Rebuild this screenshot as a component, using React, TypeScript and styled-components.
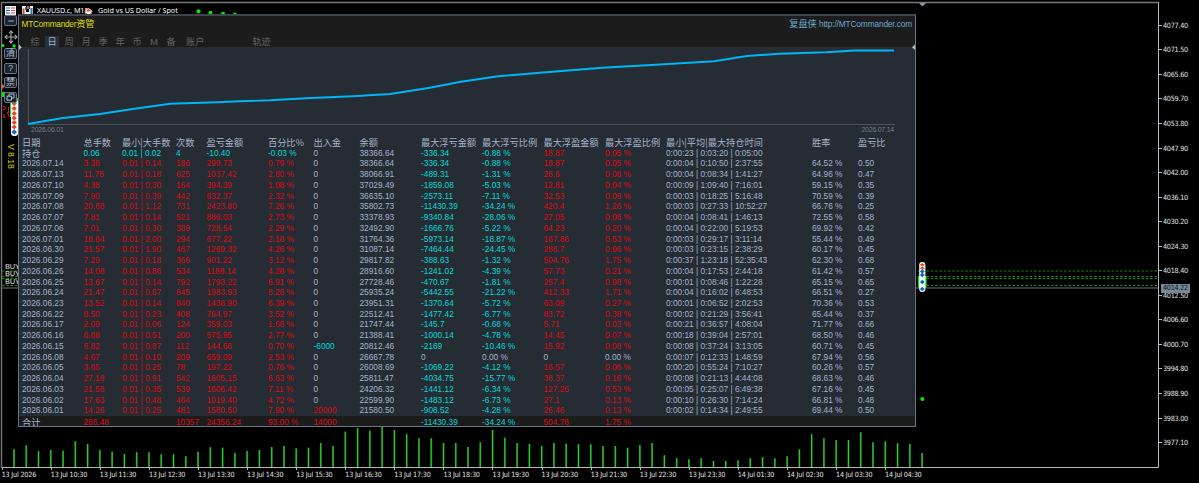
import { Minus, Move } from "lucide-react";
import styled, { createGlobalStyle } from "styled-components";

const RED = "#de0a12";
const CYAN = "#00dada";
const TEXT = "#a6b3cd";

const columns = [
  { title: "日期", width: 61.5 },
  { title: "总手数", width: 38.5 },
  { title: "最小|大手数", width: 54 },
  { title: "次数", width: 30.5 },
  { title: "盈亏金额", width: 61.5 },
  { title: "百分比%", width: 45.5 },
  { title: "出入金", width: 46 },
  { title: "余额", width: 61.5 },
  { title: "最大浮亏金额", width: 61 },
  { title: "最大浮亏比例", width: 61.5 },
  { title: "最大浮盈金额", width: 61.5 },
  { title: "最大浮盈比例", width: 61 },
  { title: "最小|平均|最大持仓时间", width: 146 },
  { title: "胜率", width: 46 },
  { title: "盈亏比", width: 50 },
];

const rows = [
  "持仓;0.06;0.01 | 0.02;4;-10.40;-0.03 %;0;38366.64;-336.34;-0.88 %;18.87;0.05 %;0:00:23 | 0:03:20 | 0:05:00;;",
  "2026.07.14;3.38;0.01 | 0.14;186;299.73;0.79 %;0;38366.64;-336.34;-0.88 %;18.87;0.05 %;0:00:04 | 0:10:50 | 2:37:55;64.52 %;0.50",
  "2026.07.13;11.78;0.01 | 0.18;625;1037.42;2.80 %;0;38066.91;-489.31;-1.31 %;28.6;0.08 %;0:00:04 | 0:08:34 | 1:41:27;64.96 %;0.47",
  "2026.07.10;4.38;0.01 | 0.30;164;394.39;1.08 %;0;37029.49;-1859.08;-5.03 %;12.81;0.04 %;0:00:09 | 1:09:40 | 7:16:01;59.15 %;0.35",
  "2026.07.09;7.90;0.01 | 0.39;442;832.37;2.32 %;0;36635.10;-2573.11;-7.11 %;32.53;0.09 %;0:00:03 | 0:18:25 | 5:16:48;70.59 %;0.39",
  "2026.07.08;20.88;0.01 | 1.12;731;2423.80;7.26 %;0;35802.73;-11430.39;-34.24 %;420.4;1.26 %;0:00:03 | 0:27:33 | 10:52:27;66.76 %;0.25",
  "2026.07.07;7.81;0.01 | 0.14;521;886.03;2.73 %;0;33378.93;-9340.84;-28.06 %;27.05;0.08 %;0:00:04 | 0:08:41 | 1:46:13;72.55 %;0.58",
  "2026.07.06;7.01;0.01 | 0.30;389;728.54;2.29 %;0;32492.90;-1666.76;-5.22 %;64.23;0.20 %;0:00:04 | 0:22:00 | 5:19:53;69.92 %;0.42",
  "2026.07.01;18.64;0.01 | 2.00;294;677.22;2.18 %;0;31764.36;-5973.14;-18.87 %;167.86;0.53 %;0:00:03 | 0:29:17 | 3:11:14;55.44 %;0.49",
  "2026.06.30;21.57;0.01 | 1.90;467;1269.32;4.26 %;0;31087.14;-7464.44;-24.45 %;286.7;0.96 %;0:00:03 | 0:23:15 | 2:38:29;60.17 %;0.45",
  "2026.06.29;7.29;0.01 | 0.18;366;901.22;3.12 %;0;29817.82;-388.63;-1.32 %;504.76;1.75 %;0:00:37 | 1:23:18 | 52:35:43;62.30 %;0.68",
  "2026.06.26;14.08;0.01 | 0.86;534;1188.14;4.28 %;0;28916.60;-1241.02;-4.39 %;57.73;0.21 %;0:00:04 | 0:17:53 | 2:44:18;61.42 %;0.57",
  "2026.06.25;13.67;0.01 | 0.14;792;1793.22;6.91 %;0;27728.46;-470.67;-1.81 %;257.4;0.98 %;0:00:01 | 0:08:46 | 1:22:28;65.15 %;0.65",
  "2026.06.24;21.47;0.01 | 0.67;845;1983.93;8.28 %;0;25935.24;-5442.55;-21.22 %;412.33;1.71 %;0:00:04 | 0:16:02 | 6:48:53;66.51 %;0.27",
  "2026.06.23;13.52;0.01 | 0.14;840;1438.90;6.39 %;0;23951.31;-1370.64;-5.72 %;63.09;0.27 %;0:00:01 | 0:06:52 | 2:02:53;70.36 %;0.53",
  "2026.06.22;8.50;0.01 | 0.23;408;764.97;3.52 %;0;22512.41;-1477.42;-6.77 %;83.72;0.38 %;0:00:02 | 0:21:29 | 3:56:41;65.44 %;0.37",
  "2026.06.17;2.09;0.01 | 0.06;124;359.03;1.68 %;0;21747.44;-145.7;-0.68 %;5.71;0.03 %;0:00:21 | 0:36:57 | 4:08:04;71.77 %;0.66",
  "2026.06.16;6.68;0.01 | 0.51;200;575.95;2.77 %;0;21388.41;-1000.14;-4.78 %;14.45;0.07 %;0:00:18 | 0:39:04 | 2:57:01;68.50 %;0.46",
  "2026.06.15;6.82;0.01 | 0.87;112;144.68;0.70 %;-6000;20812.46;-2169;-10.46 %;15.92;0.08 %;0:00:08 | 0:37:24 | 3:13:05;60.71 %;0.45",
  "2026.06.08;4.67;0.01 | 0.10;209;659.09;2.53 %;0;26667.78;0;0.00 %;0;0.00 %;0:00:07 | 0:12:33 | 1:48:59;67.94 %;0.56",
  "2026.06.05;3.65;0.01 | 0.25;78;197.22;0.76 %;0;26008.69;-1069.22;-4.12 %;16.57;0.06 %;0:00:20 | 0:55:24 | 7:10:27;60.26 %;0.57",
  "2026.06.04;27.18;0.01 | 0.91;542;1605.15;6.63 %;0;25811.47;-4034.75;-15.77 %;38.37;0.16 %;0:00:08 | 0:21:13 | 4:44:08;68.63 %;0.46",
  "2026.06.03;21.56;0.01 | 0.35;539;1606.42;7.11 %;0;24206.32;-1441.12;-6.34 %;127.26;0.53 %;0:00:05 | 0:25:07 | 6:49:38;67.16 %;0.45",
  "2026.06.02;17.63;0.01 | 0.48;464;1019.40;4.72 %;0;22599.90;-1483.12;-6.73 %;27.1;0.13 %;0:00:10 | 0:26:30 | 7:14:24;66.81 %;0.48",
  "2026.06.01;14.26;0.01 | 0.25;481;1580.50;7.90 %;20000;21580.50;-908.52;-4.28 %;26.46;0.13 %;0:00:02 | 0:14:34 | 2:49:55;69.44 %;0.50",
  "合计;286.48;;10357;24356.24;93.00 %;14000;;-11430.39;-34.24 %;504.76;1.75 %;;;",
].map((row) => row.split(";"));

const volumes = [
  17.7, 21.7, 15.7, 17, 16.3, 25.7, 23, 17, 15.3, 13, 14.7, 14.7, 12.7, 12.7, 10.7, 15.3, 19.7, 19.3, 14, 16, 17, 20,
  21, 18.7, 19.3, 24, 21, 35.3, 38.7, 36.3, 40, 37, 32.7, 28.7, 28.7, 24, 24, 20, 24.7, 37, 29.3, 24, 23, 21, 24, 23.3,
  22.7, 22.7, 21, 21, 19.3, 22, 24, 11.7, 8.7, 7.7, 8.7, 6, 6, 6.7, 8.7, 9.7, 8.7, 10.7, 17.7, 32.7, 28.7, 27, 27, 34.7,
  24.7, 25.7, 23.7, 23, 14,
];

const prices = [
  "4077.40", "4071.50", "4065.60", "4059.70", "4053.80", "4047.90", "4042.00", "4036.10", "4030.20",
  "4024.30", "4018.40", "4012.50", "4006.60", "4000.70", "3994.80", "3988.90", "3983.00", "3977.10",
];

const times = [
  "13 Jul 2026", "13 Jul 10:30", "13 Jul 11:30", "13 Jul 12:30", "13 Jul 13:30", "13 Jul 14:30", "13 Jul 15:30",
  "13 Jul 16:30", "13 Jul 17:30", "13 Jul 18:30", "13 Jul 19:30", "13 Jul 20:30", "13 Jul 21:30", "13 Jul 22:30",
  "13 Jul 23:30", "14 Jul 01:30", "14 Jul 02:30", "14 Jul 03:30", "14 Jul 04:30",
];

const tabs = ["综", "日", "周", "月", "季", "年", "币", "M", "备"];

const getColor = (value: string, col: number) => {
  if (col === 0 || col === 7 || col > 11) return TEXT;
  if (value === "0" || value === "0.00 %") return TEXT;
  return value.startsWith("-") ? CYAN : RED;
};

export default function App() {
  return (
    <Screen>
      <GlobalStyle />
      <Main>
        <Plot>
          <ChartDrawing />
          <ChartTitle>
            <QuoteIcon />
            <DepthIcon />
            <Symbol>XAUUSD.c, M15:</Symbol>
            <span>Gold vs US Dollar / Spot</span>
          </ChartTitle>
          <HouseIcon />
          <OrderLabels>
            <span>BUY</span>
            <span>BUY</span>
            <span>BUY</span>
          </OrderLabels>
          <ToolBar>
            <ToolButton>
              <Minus size={8} strokeWidth={3} />
            </ToolButton>
            <MoveHandle>
              <Move size={14} strokeWidth={2} />
            </MoveHandle>
            <ToolButton>清</ToolButton>
            <ToolButton>?</ToolButton>
            <ToolButton>禁</ToolButton>
            <ToolButton>
              <RestoreIcon />
            </ToolButton>
            <Version>V 8.18</Version>
          </ToolBar>
          <ReportPanel />
        </Plot>
        <PriceAxis>
          {prices.map((price) => (
            <Price key={price}>{price}</Price>
          ))}
          <CurrentPrice>4014.22</CurrentPrice>
        </PriceAxis>
      </Main>
      <TimeAxis>
        {times.map((time) => (
          <Time key={time}>{time}</Time>
        ))}
      </TimeAxis>
    </Screen>
  );
}

function ReportPanel() {
  return (
    <Panel>
      <PanelHead>
        <TitleLine>
          <Title>
            MTCommander<Cjk>资管</Cjk>
          </Title>
          <Site>
            <Cjk>复盘侠</Cjk> http://MTCommander.com
          </Site>
        </TitleLine>
        <Tabs>
          {tabs.map((tab) => (
            <Tab key={tab} $active={tab === "日"}>
              {tab}
            </Tab>
          ))}
          <WideTab $gap={5}>账户</WideTab>
          <WideTab $gap={48}>轨迹</WideTab>
        </Tabs>
      </PanelHead>
      <CurveBox>
        <CurveSvg width="896" height="78" viewBox="19 47 896 78">
          <path d="M28.5 49V124.5H895" fill="none" stroke="#4f5257" strokeWidth="1.2" />
          <polyline
            points="28,124 45,121 63,118 100,114 133,109 170,103.7 217,102.3 240,101.3 270,100.3 311,98 353,96.3 390,94 427,88.3 461,81.7 498,76.3 540,72.7 602,67.7 656,64.7 714,61.3 747,56 780,53.7 826,52.3 855,50.5 894,50.5"
            fill="none"
            stroke="#00b4f8"
            strokeWidth="1.9"
          />
          <path d="M19 44.5L21.8 47.3L19 50.1ZM915 44.5L912 47.3L915 50.1Z" fill="#b8bcc2" />
        </CurveSvg>
        <CurveDates>
          <span>2026.06.01</span>
          <span>2026.07.14</span>
        </CurveDates>
      </CurveBox>
      <HeadRow>
        {columns.map(({ title, width }) => (
          <Cell key={title} $width={width} $color={TEXT}>
            {title}
          </Cell>
        ))}
      </HeadRow>
      {rows.map((row) => (
        <Row key={row[0]} $total={row[0] === "合计"}>
          {row.map((value, i) => (
            <Cell key={i} $width={columns[i].width} $color={row[0] === "持仓" && i > 0 && i < 6 ? CYAN : getColor(value, i)}>
              {i === 0 && !value.startsWith("2") ? <Cjk>{value}</Cjk> : value}
            </Cell>
          ))}
        </Row>
      ))}
    </Panel>
  );
}

function ChartDrawing() {
  return (
    <svg width="1159" height="468" viewBox="0 0 1159 468">
      <path d="M1.5 468V2.5H1158" fill="none" stroke="#77777a" strokeWidth="1.4" />
      <path d="M2 467.5H1158.5V2" fill="none" stroke="#b9b9b9" />
      <path d="M919 3H926L922.5 6.5Z" fill="#8793ab" />
      <path d="M2 288H1158" stroke="#45505a" strokeWidth="1.4" />
      <g stroke="#0f900f" strokeDasharray="2.6 1.7" strokeWidth="1">
        <path d="M2 271H1158" stroke="#0b5c0b" strokeWidth="1.6" />
        <path d="M2 276.5H1158" />
        <path d="M2 278.5H1158" />
        <path d="M2 285.5H1158" />
      </g>
      {volumes.map((volume, i) => (
        <g key={i}>
          <rect x={13 + i * 12.272} y={467 - volume} width="2" height={volume} fill="#145f14" />
          <rect x={13.4 + i * 12.272} y={467 - volume} width="1.1" height={volume} fill="#32cd32" />
        </g>
      ))}
      <g fill="#00f000">
        <circle cx="198.5" cy="11.2" r="2" />
        <circle cx="210.5" cy="12.8" r="2" />
        <circle cx="223" cy="13.8" r="2" />
        <circle cx="235" cy="14.6" r="2" />
        <circle cx="3" cy="45.5" r="1.6" />
        <circle cx="14" cy="46" r="1.8" />
        <circle cx="922.3" cy="399" r="2" />
        <rect x="2" y="92" width="3" height="5" />
        <rect x="10" y="98" width="8" height="19" />
        <rect x="918" y="276" width="8.6" height="11.5" />
      </g>
      <path d="M2 84L5 86.5L2 89Z" fill="#f06040" />
      <path d="M3 106L6 107.5M3 110L6 108.5M4 114V118M8.5 107V113M3 117H6M7 112L9.5 117" stroke="#b4281c" strokeWidth="1.1" />
      <rect x="11" y="100" width="7" height="36" rx="3" fill="#fff" />
      <rect x="919.2" y="262" width="6.2" height="30" rx="3" fill="#fff" />
      {[103.5, 108.5, 113.5, 118, 122.5, 127].map((y) => (
        <path key={y} d={`M14.2 ${y - 2.4}l2.7 2.4-2.7 2.4-2.7-2.4z`} fill="#e0482e" />
      ))}
      <path d="M14.2 129.2l2.8 2.8-2.8 2.8-2.8-2.8z" fill="#1769b8" />
      {[264.7, 268.2].map((y) => (
        <path key={y} d={`M922.3 ${y - 1.8}l2.7 1.8-2.7 1.8-2.7-1.8z`} fill="#f05032" />
      ))}
      {[271.5, 275, 282, 289].map((y) => (
        <path key={y} d={`M922.3 ${y - 2.3}l2.5 2.3-2.5 2.3-2.5-2.3z`} fill="#0f69be" />
      ))}
    </svg>
  );
}

function QuoteIcon() {
  return (
    <svg width="11" height="9" viewBox="0 0 11 9">
      <rect width="11" height="9" fill="#eef1f5" />
      <path d="M1 2H5M1 4.5H5M1 7H5" stroke="#2877b9" />
      <path d="M6 2H10M6 4.5H10M6 7H10" stroke="#df4c3b" />
    </svg>
  );
}

function DepthIcon() {
  return (
    <svg width="11" height="9" viewBox="0 0 11 9">
      <path d="M0 0H4V6H7V3H8V0H11V9H0Z" fill="#f4f4f4" />
      <path d="M0.5 2.5H2.5V8.5H0.5ZM5 0H7.5V3H5Z" fill="#d9503f" />
      <path d="M8.5 2H10.5V8.5H8.5ZM3 1H4.5V4H3Z" fill="#2877b9" />
    </svg>
  );
}

function HouseIcon() {
  return (
    <House width="9" height="7" viewBox="0 0 9 7">
      <path d="M4.5 0L9 3.5H7.5V7H1.5V3.5H0Z" fill="#fff" />
      <path d="M4.5 0.5L7.5 3.5H1.5ZM2 4.2L3.5 7H1ZM7 4.2L8 7H5.5Z" fill="#e35a42" />
    </House>
  );
}

function RestoreIcon() {
  return (
    <svg width="9" height="8" viewBox="0 0 9 8" fill="none" stroke="#aebbd0">
      <path d="M1 3.2H5.5V7.2H1Z" />
      <path d="M3 3V1H8V5H6" />
    </svg>
  );
}

const GlobalStyle = createGlobalStyle`
  body {
    margin: 0;
    background: #000;
  }
  svg {
    display: block;
    flex-shrink: 0;
  }
`;

const Screen = styled.div`
  width: 1199px;
  height: 483px;
  overflow: hidden;
  background: #000;
  color: #e2e2e2;
  font-family: "DejaVu Sans Condensed", "DejaVu Sans", sans-serif;
  font-stretch: condensed;
  font-size: 7.2px;
  white-space: pre;
`;

const Main = styled.div`
  display: flex;
  height: 468px;
`;

const Plot = styled.div`
  position: relative;
  width: 1159px;
  height: 468px;
`;

const ChartTitle = styled.div`
  position: absolute;
  top: 5px;
  left: 5px;
  display: flex;
  align-items: center;
  height: 10px;
  color: #fff;
  font-family: "Noto Sans", sans-serif;
  font-size: 7.2px;
  font-stretch: normal;

  svg + svg {
    margin: 0 4px 0 6px;
  }
`;

const Symbol = styled.span`
  width: 61px;
  letter-spacing: -0.05px;
`;

const House = styled.svg`
  position: absolute;
  top: 8px;
  left: 84px;
`;

const OrderLabels = styled.div`
  position: absolute;
  top: 262px;
  left: 5px;
  display: flex;
  flex-direction: column;
  width: 13px;
  overflow: hidden;
  font-family: "Noto Sans", sans-serif;
  font-size: 7.5px;
  line-height: 8px;

  span:nth-child(2) {
    margin-top: -1px;
  }
`;

const ToolBar = styled.div`
  position: absolute;
  top: 15px;
  left: 4px;
  display: flex;
  flex-direction: column;
  align-items: center;
  gap: 3.7px;
  width: 13px;
`;

const ToolButton = styled.div`
  display: flex;
  align-items: center;
  justify-content: center;
  box-sizing: border-box;
  width: 13px;
  height: 11px;
  border: 1px solid #64748a;
  border-radius: 2px;
  background: #1d232c;
  color: #aebbd0;
  font-family: "Liberation Sans", "Noto Sans CJK SC", sans-serif;
  font-size: 9px;
  line-height: 9px;
`;

const MoveHandle = styled.div`
  display: flex;
  align-items: center;
  height: 14.5px;
  color: #a9a9a9;
`;

const Version = styled.div`
  margin-top: 37px;
  width: 10px;
  color: #d4d400;
  font-family: "Liberation Sans", sans-serif;
  font-size: 8.6px;
  line-height: 10px;
  writing-mode: vertical-rl;
`;

const Panel = styled.div`
  position: absolute;
  top: 14px;
  left: 18px;
  box-sizing: border-box;
  width: 898px;
  height: 413px;
  border: 1px solid #66758a;
  border-top: 2px solid #3c4550;
  background: #252c34;
  color: ${TEXT};
  font-family: "Liberation Sans", "Noto Sans CJK SC", sans-serif;
  font-size: 8.3px;
  overflow: hidden;
`;

const Cjk = styled.span`
  font-family: "Noto Sans CJK SC", sans-serif;
  font-size: 9.2px;
  letter-spacing: 0;
`;

const PanelHead = styled.div`
  height: 31px;
  background: #1c1c1c;
`;

const TitleLine = styled.div`
  display: flex;
  justify-content: space-between;
  padding: 1px 3px 0 2.5px;
  line-height: 13px;
`;

const Title = styled.div`
  color: #dcdc00;
  letter-spacing: -0.27px;
`;

const Site = styled.div`
  color: #6ea9cf;
  letter-spacing: -0.13px;
`;

const Tabs = styled.div`
  display: flex;
  align-items: center;
  height: 13px;
  padding: 4px 0 0 9px;
  color: #646464;
  font-size: 9.2px;
`;

const Tab = styled.div<{ $active: boolean }>`
  display: flex;
  align-items: center;
  justify-content: center;
  width: 14px;
  height: 12px;
  margin-right: 3px;
  background: ${({ $active }) => ($active ? "#28303c" : "transparent")};
  color: ${({ $active }) => ($active ? "#a3b1ca" : "inherit")};
  line-height: 12px;
`;

const WideTab = styled.div<{ $gap: number }>`
  margin-left: ${({ $gap }) => $gap}px;
  line-height: 12px;
`;

const CurveBox = styled.div`
  height: 90px;
`;

const CurveSvg = styled.svg`
  overflow: visible;
`;

const CurveDates = styled.div`
  display: flex;
  justify-content: space-between;
  padding: 0 21px 0 12px;
  color: #767c85;
  font-size: 7px;
  letter-spacing: -0.25px;
  line-height: 9px;
`;

const Row = styled.div<{ $total?: boolean }>`
  display: flex;
  height: ${({ $total }) => ($total ? 12 : 10.74)}px;
  padding-left: 3px;
  background: ${({ $total }) => ($total ? "#1c1c1c" : "transparent")};
  line-height: ${({ $total }) => ($total ? 12 : 10.74)}px;
`;

const HeadRow = styled(Row)`
  font-family: "Noto Sans CJK SC", sans-serif;
  font-size: 9.2px;
`;

const Cell = styled.div<{ $width: number; $color: string }>`
  flex: 0 0 ${({ $width }) => $width}px;
  color: ${({ $color }) => $color};
`;

const PriceAxis = styled.div`
  position: relative;
  width: 40px;
  padding-top: 13px;
`;

const Price = styled.div`
  display: flex;
  align-items: center;
  height: 24.56px;
  letter-spacing: -0.25px;

  &::before {
    content: "";
    width: 3px;
    height: 1px;
    margin-right: 1px;
    background: #b9b9b9;
  }
`;

const CurrentPrice = styled.div`
  position: absolute;
  top: 284px;
  left: 2px;
  width: 27px;
  padding-left: 2px;
  background: #778899;
  color: #10151a;
  letter-spacing: -0.25px;
  line-height: 8.5px;
`;

const TimeAxis = styled.div`
  display: flex;
  padding-left: 1.7px;
`;

const Time = styled.div`
  flex: 0 0 49.08px;
  letter-spacing: -0.2px;
  line-height: 9px;

  &::before {
    content: "";
    display: block;
    width: 1px;
    height: 2px;
    background: #b9b9b9;
  }
`;
